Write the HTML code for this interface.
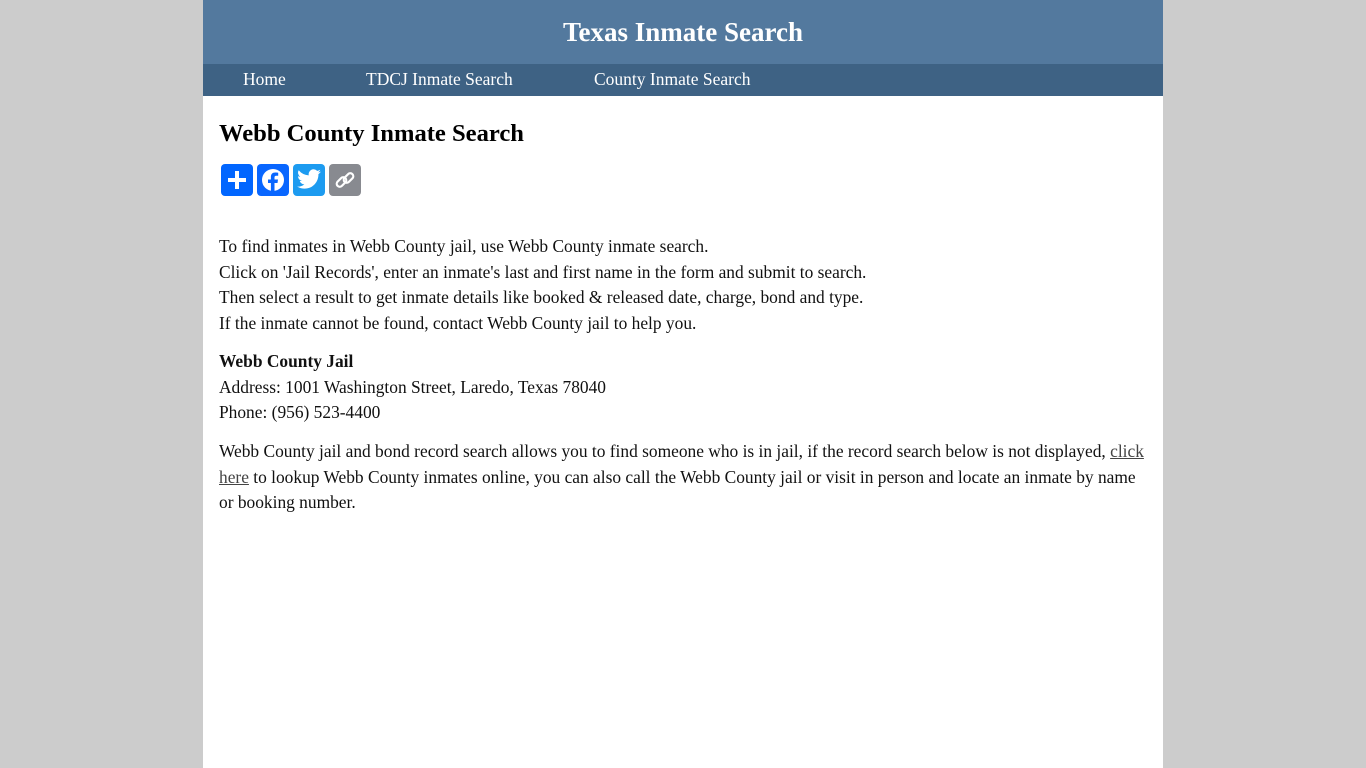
<!DOCTYPE html>
<html><head><meta charset="utf-8"><style>
body{margin:0;background:#cccccc;font-family:"Liberation Serif","DejaVu Serif",serif;}
.wrap{position:absolute;left:203px;top:0;width:960px;height:768px;background:#fff;}
.hdr{height:64px;background:#53799e;color:#fff;text-align:center;font-weight:bold;font-size:27px;line-height:64px;}
.nav{height:32px;background:#3e6284;position:relative;color:#fff;font-size:17.5px;}
.nav span{position:absolute;top:5px;line-height:20px;white-space:nowrap}
h1{position:absolute;left:16px;top:120px;margin:0;font-size:24.6px;line-height:28px;}
.icons{position:absolute;left:18px;top:164px;display:flex;gap:4px}
.icons div{width:32px;height:32px;border-radius:4px;display:flex;align-items:center;justify-content:center}
.t{position:absolute;left:16px;font-size:17.4px;line-height:25.7px;white-space:nowrap;color:#111}
a{color:#444;text-decoration:underline}
</style></head><body><div class="wrap">
<div class="hdr">Texas Inmate Search</div>
<div class="nav"><span style="left:40px">Home</span><span style="left:163px">TDCJ Inmate Search</span><span style="left:391px">County Inmate Search</span></div>
<h1>Webb County Inmate Search</h1>
<div class="icons">
<div style="background:#0166ff"><svg width="22" height="22" viewBox="0 0 22 22"><path d="M11 2v18M2 11h18" stroke="#fff" stroke-width="4"/></svg></div>
<div style="background:#0866ff"><svg width="26" height="26" viewBox="0 0 26 26"><circle cx="13" cy="13" r="11" fill="#fff"/><path d="M14.5 26V16h3l.5-3.5h-3.5v-2c0-1 .4-1.7 1.8-1.7h1.9V5.7c-.4 0-1.6-.2-2.9-.2-2.8 0-4.4 1.6-4.4 4.5v2.5H8V16h2.9v10z" fill="#0866ff"/></svg></div>
<div style="background:#1d9bf0"><svg width="26" height="22" viewBox="0 0 24 20"><path d="M23 2.3c-.8.4-1.7.6-2.6.7.9-.6 1.6-1.4 2-2.5-.9.5-1.9.9-2.9 1.1A4.5 4.5 0 0 0 11.8 5.7 12.8 12.8 0 0 1 2.5 1a4.5 4.5 0 0 0 1.4 6c-.7 0-1.4-.2-2-.6 0 2.2 1.6 4 3.6 4.4-.7.2-1.4.2-2 .1.6 1.8 2.2 3.1 4.2 3.1A9 9 0 0 1 1 16c2 1.3 4.4 2 6.9 2 8.3 0 12.8-6.9 12.8-12.8v-.6c.9-.6 1.6-1.4 2.3-2.3z" fill="#fff"/></svg></div>
<div style="background:#888a90"><svg width="24" height="24" viewBox="0 0 24 24" fill="none" stroke="#fff" stroke-width="2.2"><rect x="3" y="11" width="11" height="6" rx="3" transform="rotate(-45 8.5 14)"/><rect x="10" y="7" width="11" height="6" rx="3" transform="rotate(-45 15.5 10)"/></svg></div>
</div>
<div class="t" style="top:234px">To find inmates in Webb County jail, use Webb County inmate search.<br>Click on 'Jail Records', enter an inmate's last and first name in the form and submit to search.<br>Then select a result to get inmate details like booked &amp; released date, charge, bond and type.<br>If the inmate cannot be found, contact Webb County jail to help you.</div>
<div class="t" style="top:349px"><b>Webb County Jail</b><br>Address: 1001 Washington Street, Laredo, Texas 78040<br>Phone: (956) 523-4400</div>
<div class="t" style="top:439px">Webb County jail and bond record search allows you to find someone who is in jail, if the record search below is not displayed, <a>click</a><br><a>here</a> to lookup Webb County inmates online, you can also call the Webb County jail or visit in person and locate an inmate by name<br>or booking number.</div>
</div></body></html>
